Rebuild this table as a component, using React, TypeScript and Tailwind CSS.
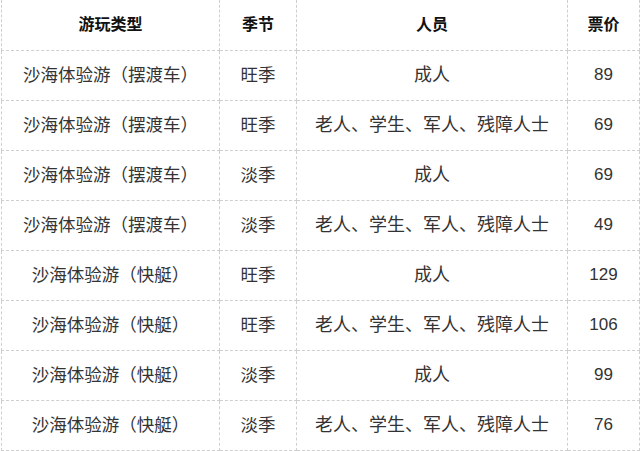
import React from 'react';

const rows = [
  { type: '沙海体验游（摆渡车）', season: '旺季', people: '成人', price: '89' },
  { type: '沙海体验游（摆渡车）', season: '旺季', people: '老人、学生、军人、残障人士', price: '69' },
  { type: '沙海体验游（摆渡车）', season: '淡季', people: '成人', price: '69' },
  { type: '沙海体验游（摆渡车）', season: '淡季', people: '老人、学生、军人、残障人士', price: '49' },
  { type: '沙海体验游（快艇）', season: '旺季', people: '成人', price: '129' },
  { type: '沙海体验游（快艇）', season: '旺季', people: '老人、学生、军人、残障人士', price: '106' },
  { type: '沙海体验游（快艇）', season: '淡季', people: '成人', price: '99' },
  { type: '沙海体验游（快艇）', season: '淡季', people: '老人、学生、军人、残障人士', price: '76' },
];

const cjk = "font-['Liberation_Serif','Noto_Sans_CJK_SC',serif]";

const App: React.FC = () => {
  return (
    <div className="w-[640px] h-[451px] bg-white overflow-hidden pl-px">
      <table className="border-collapse table-fixed w-[638px] text-center">
        <colgroup>
          <col className="w-[218px]" />
          <col className="w-[77px]" />
          <col className="w-[271px]" />
          <col className="w-[72px]" />
        </colgroup>
        <thead>
          <tr className="h-[50px]">
            {['游玩类型', '季节', '人员', '票价'].map((h) => (
              <th
                key={h}
                className={`border border-dashed border-[#cfcfcf] border-t-0 text-[16px] font-bold text-[#111] ${cjk}`}
              >
                {h}
              </th>
            ))}
          </tr>
        </thead>
        <tbody>
          {rows.map((r, i) => (
            <tr key={i} className="h-[50px] text-[17.5px] text-[#333]">
              <td className={`border border-dashed border-[#cfcfcf] ${cjk}`}>{r.type}</td>
              <td className={`border border-dashed border-[#cfcfcf] ${cjk}`}>{r.season}</td>
              <td className={`border border-dashed border-[#cfcfcf] text-[18px] ${cjk}`}>{r.people}</td>
              <td className="border border-dashed border-[#cfcfcf] font-['Liberation_Sans',sans-serif] text-[17px]">
                {r.price}
              </td>
            </tr>
          ))}
        </tbody>
      </table>
    </div>
  );
};

export default App;
